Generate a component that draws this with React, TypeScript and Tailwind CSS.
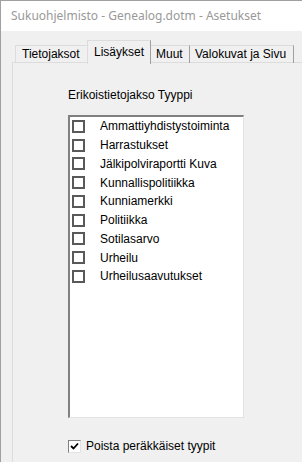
import React from "react";

const items = [
  "Ammattiyhdistystoiminta",
  "Harrastukset",
  "Jälkipolviraportti Kuva",
  "Kunnallispolitiikka",
  "Kunniamerkki",
  "Politiikka",
  "Sotilasarvo",
  "Urheilu",
  "Urheilusaavutukset",
];

export default function App() {
  const font = { fontFamily: '"Liberation Sans", Arial, sans-serif' };
  return (
    <div className="w-[302px] h-[462px] overflow-hidden bg-[#f0f0f0] border-l border-t border-[#a0a0a0] flex flex-col" style={font}>
      <div className="h-[30px] bg-white shrink-0 flex items-center pl-[10px] text-[12px] text-[#999]" style={{ fontFamily: '"Noto Sans", "Open Sans", sans-serif' }}>
        Sukuohjelmisto - Genealog.dotm - Asetukset
      </div>
      <div className="flex-1 pl-[11px] pt-[9px] flex flex-col">
        {/* tabs */}
        <div className="flex items-end h-[22px] relative z-10 text-[12px] text-black">
          <div className="ml-[3px] h-[18px] w-[72px] border-t border-l border-[#dcdcdc] flex items-center pl-[6px] mb-[-1px] pb-[2px]">Tietojaksot</div>
          <div className="w-[64px] border-t border-l border-r border-[#dcdcdc] border-r-[#a0a0a0] bg-[#f0f0f0] flex items-start pt-[2px] pl-[6px] mb-[-2px] h-[24px]">Lisäykset</div>
          <div className="h-[18px] w-[39px] border-t border-r border-[#dcdcdc] border-r-[#a0a0a0] flex items-center pl-[5px] mb-[-1px] pb-[2px]">Muut</div>
          <div className="h-[18px] w-[104px] border-t border-r border-[#dcdcdc] border-r-[#a0a0a0] flex items-center pl-[5px] mb-[-1px] pb-[2px]">Valokuvat ja Sivu</div>
        </div>
        {/* panel */}
        <div className="flex-1 border-l border-t border-[#dcdcdc] bg-[#f0f0f0] flex flex-col pl-[55px]">
          <div className="mt-[25px] h-[14px] text-[12px] leading-[14px] text-black">Erikoistietojakso Tyyppi</div>
          <div className="mt-[13px] w-[176px] h-[303px] bg-white border-l-2 border-t-2 border-[#808080] border-r border-b border-r-[#e3e3e3] border-b-[#e3e3e3] pl-[2px]">
            {items.map((t) => (
              <div key={t} className="h-[18.75px] flex items-center">
                <div className="w-[13px] h-[13px] border-2 border-[#595959] bg-white shrink-0" />
                <span className="ml-[15px] text-[12px] text-black leading-[14px]">{t}</span>
              </div>
            ))}
          </div>
          <div className="mt-[21px] flex items-center">
            <div className="w-[13px] h-[13px] bg-white border-l border-t border-[#808080] border-r border-b border-r-[#e3e3e3] border-b-[#e3e3e3] flex items-center justify-center">
              <svg width="9" height="9" viewBox="0 0 9 9">
                <path d="M1 4 L3.5 6.5 L8 1.5" stroke="#000" strokeWidth="1.8" fill="none" />
              </svg>
            </div>
            <span className="ml-[5px] text-[12px] leading-[14px] text-black">Poista peräkkäiset tyypit</span>
          </div>
        </div>
      </div>
    </div>
  );
}
